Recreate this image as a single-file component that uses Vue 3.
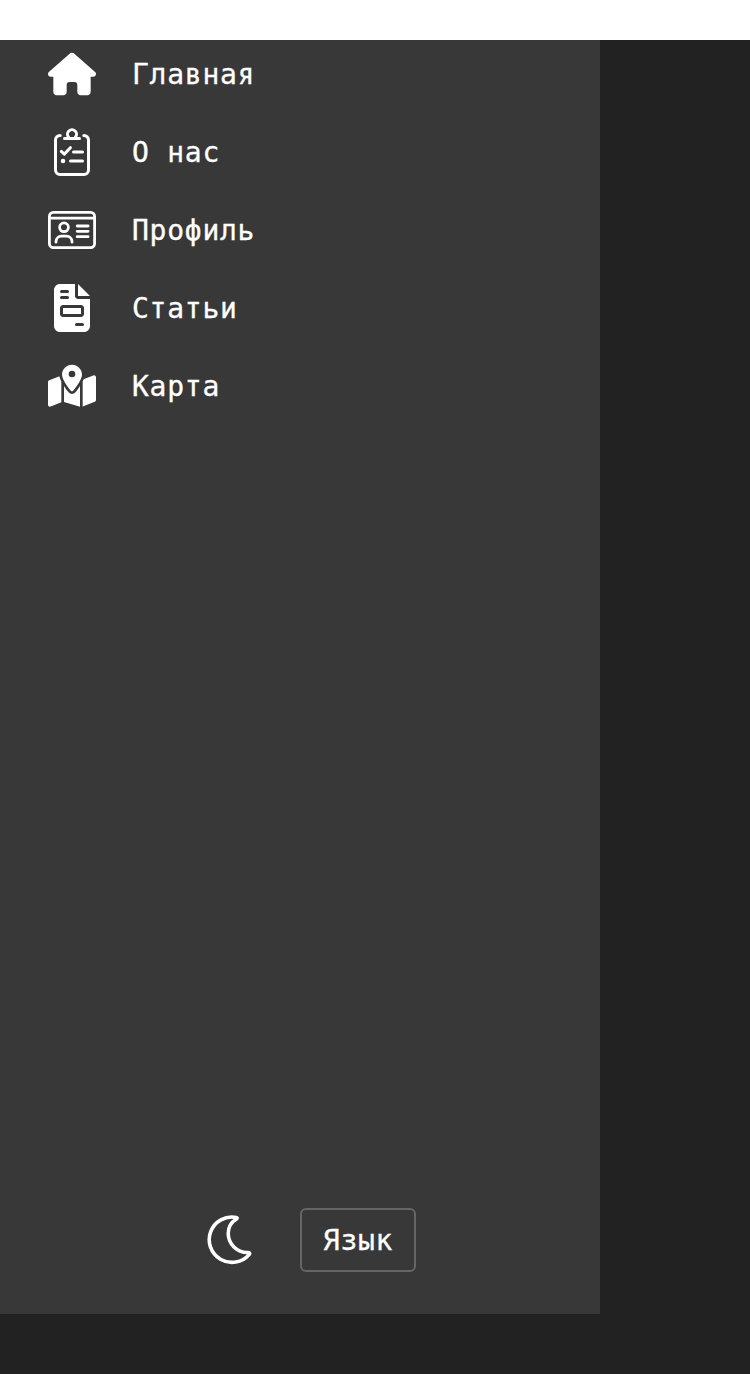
<script setup>
const items = [
  { id: 'home', label: 'Главная' },
  { id: 'about', label: 'О нас' },
  { id: 'profile', label: 'Профиль' },
  { id: 'articles', label: 'Статьи' },
  { id: 'map', label: 'Карта' },
]
</script>

<template>
  <div class="page">
    <aside class="sidebar">
      <nav class="menu">
        <a v-for="item in items" :key="item.id" class="item">
          <svg v-if="item.id === 'home'" class="icon" viewBox="0 -32 576 576" fill="currentColor">
            <path d="M575.8 255.5c0 18-15 32.1-32 32.1h-32l.7 160.2c0 2.7-.2 5.4-.5 8.1V472c0 22.1-17.9 40-40 40H456c-1.1 0-2.2 0-3.3-.1c-1.4 .1-2.8 .1-4.2 .1H416 392c-22.1 0-40-17.9-40-40V448 384c0-17.7-14.3-32-32-32H256c-17.7 0-32 14.3-32 32v64 24c0 22.1-17.9 40-40 40H160 128.1c-1.5 0-3-.1-4.5-.2c-1.2 .1-2.4 .2-3.6 .2H104c-22.1 0-40-17.9-40-40V360c0-.9 0-1.9 .1-2.8V287.6H32c-18 0-32-14-32-32.1c0-9 3-17 10-24L266.4 8c7-7 15-8 22-8s15 2 21 7L564.8 231.5c8 7 12 15 11 24z" />
          </svg>
          <svg v-else-if="item.id === 'about'" class="icon line" viewBox="0 0 48 48">
            <path d="M12.2 7.6C9.4 7.6 7.5 9.6 7.5 12V42a4.5 4.5 0 0 0 4.5 4.5H36a4.5 4.5 0 0 0 4.5-4.5V12C40.5 9.6 38.6 7.6 35.8 7.6" />
            <path d="M16.5 10.5H31.5" />
            <path d="M20.6 9.2A4.5 4.5 0 1 1 27.4 9.2" />
            <path d="M13.3 23.4L16.3 26.1L22.4 19.7M25.5 24H34.5M22.5 33H34.5" />
            <circle cx="15" cy="33" r="2.25" fill="currentColor" stroke="none" />
          </svg>
          <svg v-else-if="item.id === 'profile'" class="icon line thin" viewBox="0 0 48 48">
            <rect x="1.4" y="6.4" width="45.2" height="35.2" rx="4" />
            <path d="M1.3 12.2H46.7" />
            <circle cx="16" cy="21.3" r="4.4" />
            <path d="M8 36.200V35.500A5.500 5.500 0 0 1 13.500 30.200H18.500A5.500 5.500 0 0 1 24 35.500V36.200" />
            <path d="M29.200 20H40.100M29.200 25.300H40.100M29.200 30.700H40.100" />
          </svg>
          <svg v-else-if="item.id === 'articles'" class="icon" viewBox="-64 0 512 512" fill="currentColor">
            <path fill-rule="evenodd" d="M64 0C28.700 0 0 28.700 0 64V448c0 35.300 28.700 64 64 64H320c35.300 0 64-28.700 64-64V160H256c-17.700 0-32-14.300-32-32V0H64zM256 0V128H384L256 0zM80 64h64a16 16 0 0 1 0 32H80a16 16 0 0 1 0-32zm0 64h64a16 16 0 0 1 0 32H80a16 16 0 0 1 0-32zm16 96H288c17.700 0 32 14.300 32 32v64c0 17.700-14.300 32-32 32H96c-17.700 0-32-14.300-32-32V256c0-17.700 14.300-32 32-32zm0 32v64H288V256H96zM240 416h64a16 16 0 0 1 0 32H240a16 16 0 0 1 0-32z" />
          </svg>
          <svg v-else class="icon" viewBox="0 -32 576 576" fill="currentColor">
            <path fill-rule="evenodd" d="M408 120c0 54.600-73.100 151.900-105.200 192c-7.700 9.600-22 9.600-29.600 0C241.100 271.900 168 174.600 168 120C168 53.700 221.700 0 288 0s120 53.700 120 120zm8 80.400c3.500-6.900 6.700-13.800 9.600-20.600c.5-1.200 1-2.500 1.500-3.700l116-46.400C558.900 123.400 576 135 576 152V422.800c0 9.800-6 18.600-15.100 22.300L416 503V200.400zM137.600 138.300c2.400 14.100 7.200 28.300 12.800 41.500c2.900 6.800 6.100 13.700 9.600 20.600V451.800L32.900 502.700C17.100 509 0 497.400 0 480.400V209.600c0-9.800 6-18.600 15.100-22.300l122.600-49zM327.800 332c13.900-17.400 35.700-45.700 56.200-77V504.300L192 449.400V255c20.500 31.300 42.300 59.600 56.200 77c20.500 25.600 59.100 25.600 79.600 0zM288 152a40 40 0 1 0 0-80 40 40 0 1 0 0 80z" />
          </svg>
          <span class="label">{{ item.label }}</span>
        </a>
      </nav>
      <footer class="controls">
        <svg class="moon" viewBox="206 1212 48 56">
          <path d="M236.300 1217.400A22.700 22.700 0 1 0 249.300 1254.300C250.100 1253.100 249.300 1252.300 247.700 1252.500A19.200 19.200 0 0 1 228.200 1233.300C228.200 1227.500 231.500 1222 236.500 1219C237.400 1218.400 237.300 1217.600 236.300 1217.400Z" />
        </svg>
        <button class="lang">Язык</button>
      </footer>
    </aside>
  </div>
</template>

<style>
body {
  background: #fff;
}
</style>

<style scoped>
.page {
  box-sizing: border-box;
  height: 1334px;
  margin-top: 40px;
  background: #222;
  color: #fff;
}
.sidebar,
.lang {
  font-family: 'DejaVu Sans Mono', monospace;
  font-size: 28px;
  letter-spacing: 0.74px;
  -webkit-text-stroke: 0.3px #fff;
}
.sidebar {
  box-sizing: border-box;
  width: 600px;
  height: 1274px;
  padding: 10px 0 42px;
  display: flex;
  flex-direction: column;
  justify-content: space-between;
  background: #383838;
}
.menu {
  display: flex;
  flex-direction: column;
  gap: 30px;
  padding-left: 48px;
}
.item {
  display: flex;
  align-items: center;
  gap: 36px;
  height: 48px;
  line-height: 48px;
}
.label {
  padding-top: 2px;
}
.icon {
  width: 48px;
  height: 48px;
  flex: none;
}
.line {
  fill: none;
  stroke: currentColor;
  stroke-width: 3;
  stroke-linecap: round;
  stroke-linejoin: round;
}
.thin {
  stroke-width: 2.8;
}
.controls {
  display: flex;
  align-items: center;
  gap: 46px;
  padding-left: 206px;
}
.moon {
  width: 48px;
  height: 56px;
  fill: none;
  stroke: #fff;
  stroke-width: 3.6;
  stroke-linejoin: round;
}
.lang {
  box-sizing: border-box;
  width: 116px;
  height: 64px;
  padding: 0;
  border: 2px solid #666;
  border-radius: 6px;
  background: transparent;
  color: #fff;
}
</style>
